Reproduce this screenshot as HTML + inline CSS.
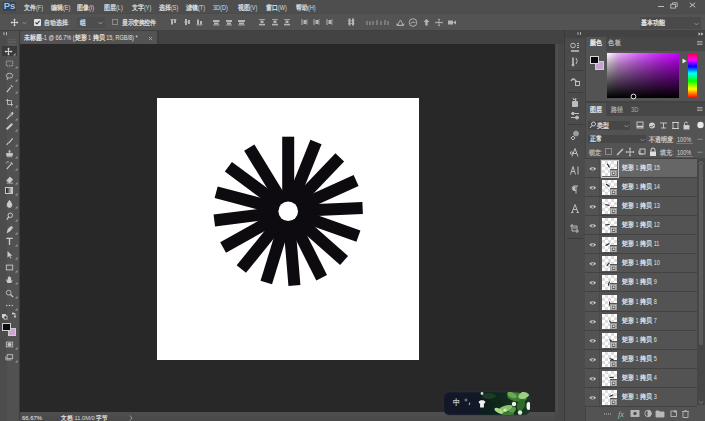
<!DOCTYPE html><html><head><meta charset="utf-8"><style>
*{margin:0;padding:0;box-sizing:border-box}
html,body{width:705px;height:421px;overflow:hidden;background:#424242;font-family:"Liberation Sans",sans-serif;color:#d6d6d6}
.a{position:absolute}
.t{position:absolute;white-space:nowrap;font-size:7px;line-height:8px;overflow:visible;color:#dcdcdc}
.c{display:inline-block;text-align:left;overflow:visible;-webkit-text-stroke:0.3px currentColor}
svg{position:absolute;overflow:visible}
</style></head><body>
<div class="a" style="left:0px;top:0px;width:705px;height:13px;background:#4e4e4e;"></div><div class="a" style="left:0px;top:13px;width:705px;height:17px;background:#535353;border-top:1px solid #4b4b4b"></div><div class="a" style="left:0px;top:30px;width:705px;height:1px;background:#404040;"></div><div class="a" style="left:0px;top:31px;width:20px;height:390px;background:#515151;"></div><div class="a" style="left:0px;top:31px;width:6.5px;height:390px;background:#4c4c4c;"></div><div class="a" style="left:19.3px;top:31px;width:0.9px;height:390px;background:#3c3c3c;"></div><div class="a" style="left:20px;top:31px;width:535px;height:13px;background:#434343;"></div><div class="a" style="left:20px;top:31px;width:137px;height:13px;background:#535353;"></div><div class="a" style="left:20px;top:44px;width:535px;height:369px;background:#282828;"></div><div class="a" style="left:20px;top:412.2px;width:535px;height:8.8px;background:linear-gradient(#4f4f4f,#494949);"></div><div class="a" style="left:555px;top:30px;width:150px;height:391px;background:#434343;"></div><div class="a" style="left:555px;top:44px;width:9px;height:377px;background:#484848;"></div><div class="a" style="left:556px;top:44px;width:1.5px;height:369px;background:#4e4e4e;"></div><div class="a" style="left:564px;top:30px;width:1px;height:391px;background:#3a3a3a;"></div><div class="a" style="left:565px;top:38px;width:20px;height:383px;background:#4b4b4b;"></div><div class="a" style="left:586px;top:37px;width:119px;height:64px;background:#535353;"></div><div class="a" style="left:586px;top:37px;width:119px;height:14px;background:#474747;"></div><div class="a" style="left:586px;top:37px;width:19.5px;height:14px;background:#535353;"></div><div class="a" style="left:586px;top:103px;width:119px;height:318px;background:#535353;"></div><div class="a" style="left:586px;top:103px;width:119px;height:13px;background:#474747;"></div><div class="a" style="left:586px;top:103px;width:20px;height:13px;background:#535353;"></div><div class="a" style="left:157px;top:98px;width:262px;height:261.5px;background:#ffffff;"></div><svg style="left:0;top:0" width="705" height="421" viewBox="0 0 705 421"><g transform="translate(288.2,211.2)" fill="#0d0b10"><rect x="-6" y="-74.5" width="12" height="80.5" transform="rotate(0.0)"/><rect x="-6" y="-74.5" width="12" height="80.5" transform="rotate(21.9)"/><rect x="-6" y="-74.5" width="12" height="80.5" transform="rotate(43.8)"/><rect x="-6" y="-74.5" width="12" height="80.5" transform="rotate(65.7)"/><rect x="-6" y="-74.5" width="12" height="80.5" transform="rotate(87.6)"/><rect x="-6" y="-74.5" width="12" height="80.5" transform="rotate(109.5)"/><rect x="-6" y="-74.5" width="12" height="80.5" transform="rotate(131.4)"/><rect x="-6" y="-74.5" width="12" height="80.5" transform="rotate(153.3)"/><rect x="-6" y="-74.5" width="12" height="80.5" transform="rotate(175.2)"/><rect x="-6" y="-74.5" width="12" height="80.5" transform="rotate(197.1)"/><rect x="-6" y="-74.5" width="12" height="80.5" transform="rotate(219.0)"/><rect x="-6" y="-74.5" width="12" height="80.5" transform="rotate(240.9)"/><rect x="-6" y="-74.5" width="12" height="80.5" transform="rotate(262.8)"/><rect x="-6" y="-74.5" width="12" height="80.5" transform="rotate(284.7)"/><rect x="-6" y="-74.5" width="12" height="80.5" transform="rotate(306.6)"/><rect x="-6" y="-74.5" width="12" height="80.5" transform="rotate(328.5)"/></g><circle cx="288.2" cy="211.2" r="9.8" fill="#fff"/></svg><div class="a" style="left:607px;top:53px;width:72px;height:45px;background:linear-gradient(to right,#fff 0%,#eeb0ff 15%,#dc68ff 42%,#cf28ff 72%,#c800ff 100%);"></div><div class="a" style="left:607px;top:53px;width:72px;height:45px;background:linear-gradient(to bottom,rgba(0,0,0,0) 0%,rgba(0,0,0,0.3) 25%,rgba(0,0,0,0.55) 50%,rgba(0,0,0,0.78) 75%,#000 100%);"></div><div class="a" style="left:687.8px;top:53px;width:8.8px;height:45.3px;background:linear-gradient(to bottom,#ff0030,#ff00ff 15%,#0000ff 30%,#00ffff 45%,#00ff00 62%,#ffff00 80%,#ff6000 92%,#ff0000);"></div><div class="a" style="left:3px;top:1.5px;width:13px;height:9px;background:#32445a;"></div><div class="t" style="left:3.8px;top:1px;font-size:9.5px;line-height:10px;color:#a2c2de;font-weight:bold;letter-spacing:-0.2px">Ps</div><div class="t" style="left:23.5px;top:3.6px;font-size:6.5px;line-height:7.5px;transform:scaleX(0.85);transform-origin:0 0;"><span class="c" style="width:7.0588235294117645px">文</span><span class="c" style="width:7.0588235294117645px">件</span>(F)</div><div class="t" style="left:50.7px;top:3.6px;font-size:6.5px;line-height:7.5px;transform:scaleX(0.85);transform-origin:0 0;"><span class="c" style="width:7.0588235294117645px">编</span><span class="c" style="width:7.0588235294117645px">辑</span>(E)</div><div class="t" style="left:77.1px;top:3.6px;font-size:6.5px;line-height:7.5px;transform:scaleX(0.85);transform-origin:0 0;"><span class="c" style="width:7.0588235294117645px">图</span><span class="c" style="width:7.0588235294117645px">像</span>(I)</div><div class="t" style="left:103.5px;top:3.6px;font-size:6.5px;line-height:7.5px;transform:scaleX(0.85);transform-origin:0 0;"><span class="c" style="width:7.0588235294117645px">图</span><span class="c" style="width:7.0588235294117645px">层</span>(L)</div><div class="t" style="left:131.7px;top:3.6px;font-size:6.5px;line-height:7.5px;transform:scaleX(0.85);transform-origin:0 0;"><span class="c" style="width:7.0588235294117645px">文</span><span class="c" style="width:7.0588235294117645px">字</span>(Y)</div><div class="t" style="left:159px;top:3.6px;font-size:6.5px;line-height:7.5px;transform:scaleX(0.85);transform-origin:0 0;"><span class="c" style="width:7.0588235294117645px">选</span><span class="c" style="width:7.0588235294117645px">择</span>(S)</div><div class="t" style="left:186px;top:3.6px;font-size:6.5px;line-height:7.5px;transform:scaleX(0.85);transform-origin:0 0;"><span class="c" style="width:7.0588235294117645px">滤</span><span class="c" style="width:7.0588235294117645px">镜</span>(T)</div><div class="t" style="left:213.4px;top:3.6px;font-size:6.5px;line-height:7.5px;transform:scaleX(0.85);transform-origin:0 0;">3D(D)</div><div class="t" style="left:237.7px;top:3.6px;font-size:6.5px;line-height:7.5px;transform:scaleX(0.85);transform-origin:0 0;"><span class="c" style="width:7.0588235294117645px">视</span><span class="c" style="width:7.0588235294117645px">图</span>(V)</div><div class="t" style="left:265.7px;top:3.6px;font-size:6.5px;line-height:7.5px;transform:scaleX(0.85);transform-origin:0 0;"><span class="c" style="width:7.0588235294117645px">窗</span><span class="c" style="width:7.0588235294117645px">口</span>(W)</div><div class="t" style="left:295.5px;top:3.6px;font-size:6.5px;line-height:7.5px;transform:scaleX(0.85);transform-origin:0 0;"><span class="c" style="width:7.0588235294117645px">帮</span><span class="c" style="width:7.0588235294117645px">助</span>(H)</div><div class="a" style="left:657.5px;top:6px;width:6.5px;height:1px;background:#bcbcbc;"></div><svg style="left:669.5px;top:1.5px" width="9" height="7"><rect x="0.8" y="2.3" width="4.6" height="3.8" fill="none" stroke="#bcbcbc" stroke-width="0.9"/><path d="M2.5 2.3V0.8h4.7v3.8H5.4" fill="none" stroke="#bcbcbc" stroke-width="0.9"/></svg><svg style="left:688.5px;top:2px" width="7" height="6"><path d="M0.8 0.8L6.2 5.2M6.2 0.8L0.8 5.2" stroke="#c4c4c4" stroke-width="1"/></svg><svg style="left:10px;top:18px" width="9" height="9" viewBox="0 0 9 9"><path d="M4.5 0.5L6 2.2H3zM4.5 8.5L6 6.8H3zM0.5 4.5L2.2 3V6zM8.5 4.5L6.8 3V6z" fill="#d2d2d2"/><path d="M4.5 1.5V7.5M1.5 4.5H7.5" stroke="#d2d2d2" stroke-width="1"/></svg><svg style="left:22px;top:21px" width="5" height="4"><path d="M0.5 1L2.5 3L4.5 1" stroke="#9a9a9a" fill="none" stroke-width="0.8"/></svg><div class="a" style="left:34px;top:19px;width:6.5px;height:6.5px;background:#e4e4e4;border-radius:1px"></div><svg style="left:34px;top:19px" width="7" height="7"><path d="M1.5 3.5L3 5L5.5 1.8" stroke="#333" fill="none" stroke-width="1.1"/></svg><div class="t" style="left:44px;top:18.7px;font-size:6.5px;line-height:7.5px;transform:scaleX(0.85);transform-origin:0 0;"><span class="c" style="width:7.0588235294117645px">自</span><span class="c" style="width:7.0588235294117645px">动</span><span class="c" style="width:7.0588235294117645px">选</span><span class="c" style="width:7.0588235294117645px">择</span>:</div><div class="a" style="left:76.5px;top:17px;width:28.5px;height:11px;background:#4d4d4d;"></div><div class="t" style="left:80px;top:18.7px;font-size:6.5px;line-height:7.5px;transform:scaleX(0.85);transform-origin:0 0;"><span class="c" style="width:7.0588235294117645px">组</span></div><svg style="left:98px;top:21px" width="5" height="4"><path d="M0.5 1L2.5 3L4.5 1" stroke="#aaa" fill="none" stroke-width="0.8"/></svg><div class="a" style="left:111.5px;top:19px;width:6px;height:6px;background:transparent;border:1px solid #8a8a8a"></div><div class="t" style="left:122px;top:18.7px;font-size:6.5px;line-height:7.5px;transform:scaleX(0.85);transform-origin:0 0;"><span class="c" style="width:6.588235294117647px">显</span><span class="c" style="width:6.588235294117647px">示</span><span class="c" style="width:6.588235294117647px">变</span><span class="c" style="width:6.588235294117647px">换</span><span class="c" style="width:6.588235294117647px">控</span><span class="c" style="width:6.588235294117647px">件</span></div><svg style="left:170px;top:18px" width="8" height="8" viewBox="0 0 8 8" fill="#b4b4b4"><rect x="0.5" y="1" width="6" height="0.8"/><rect x="1" y="1.5" width="2" height="5"/><rect x="4" y="1.5" width="2" height="3.5"/></svg><svg style="left:183.5px;top:18px" width="8" height="8" viewBox="0 0 8 8" fill="#b4b4b4"><rect x="0" y="3.6" width="6" height="0.8"/><rect x="1" y="1" width="2" height="6"/><rect x="4" y="2" width="2" height="4"/></svg><svg style="left:196px;top:18px" width="8" height="8" viewBox="0 0 8 8" fill="#b4b4b4"><rect x="0.5" y="6.5" width="6" height="0.8"/><rect x="1" y="1.5" width="2" height="5"/><rect x="4" y="3" width="2" height="3.5"/></svg><svg style="left:213px;top:18px" width="8" height="8" viewBox="0 0 8 8" fill="#b4b4b4"><rect x="0" y="2" width="6.5" height="2"/><rect x="1" y="4.5" width="4.5" height="2"/><rect x="0" y="6.6" width="6.5" height="0.8"/></svg><svg style="left:226px;top:18px" width="8" height="8" viewBox="0 0 8 8" fill="#b4b4b4"><rect x="0" y="2" width="6" height="2"/><rect x="1" y="4.5" width="4" height="2"/><rect x="0" y="6.6" width="6" height="0.8"/></svg><svg style="left:238px;top:18px" width="8" height="8" viewBox="0 0 8 8" fill="#b4b4b4"><rect x="0" y="2" width="7" height="2"/><rect x="1" y="4.5" width="5" height="2"/><rect x="0" y="6.6" width="7" height="0.8"/></svg><svg style="left:259px;top:18px" width="8" height="8" viewBox="0 0 8 8" fill="#b4b4b4"><rect x="0" y="1" width="6" height="0.8"/><rect x="1.5" y="2.5" width="3" height="2.5"/><rect x="0" y="5.8" width="6" height="1.6"/></svg><svg style="left:271.5px;top:18px" width="8" height="8" viewBox="0 0 8 8" fill="#b4b4b4"><rect x="0" y="1" width="6" height="0.8"/><rect x="1.5" y="2.5" width="3" height="2.5"/><rect x="0" y="5.8" width="6" height="1.6"/></svg><svg style="left:284px;top:18px" width="8" height="8" viewBox="0 0 8 8" fill="#b4b4b4"><rect x="0" y="1" width="6" height="0.8"/><rect x="1.5" y="2.5" width="3" height="2.5"/><rect x="0" y="5.8" width="6" height="1.6"/></svg><svg style="left:300.5px;top:18px" width="8" height="8" viewBox="0 0 8 8" fill="#b4b4b4"><rect x="0.5" y="1" width="1" height="6"/><rect x="2.5" y="2" width="3" height="4"/><rect x="5.5" y="1" width="1" height="6" opacity="0.6"/></svg><svg style="left:313px;top:18px" width="8" height="8" viewBox="0 0 8 8" fill="#b4b4b4"><rect x="0.5" y="1" width="1" height="6"/><rect x="2.5" y="2" width="3" height="4"/><rect x="5.5" y="1" width="1" height="6" opacity="0.6"/></svg><svg style="left:326px;top:18px" width="8" height="8" viewBox="0 0 8 8" fill="#b4b4b4"><rect x="0.5" y="1" width="1" height="6"/><rect x="2.5" y="2" width="3" height="4"/><rect x="5.5" y="1" width="1" height="6" opacity="0.6"/></svg><svg style="left:347.5px;top:18px" width="8" height="8" viewBox="0 0 8 8" fill="#b4b4b4"><rect x="0.5" y="0.5" width="2" height="7"/><rect x="4" y="0.5" width="2" height="7"/><rect x="0" y="2.5" width="6.5" height="0.8"/><rect x="0" y="5" width="6.5" height="0.8"/></svg><svg style="left:365px;top:18px" width="25" height="8" opacity="0.4" fill="#b4b4b4"><rect x="1" y="3" width="2" height="4"/><rect x="4" y="3" width="2" height="4"/><rect x="7" y="3" width="2" height="4"/><rect x="11" y="2" width="2" height="5"/><rect x="15" y="3" width="2" height="4"/><rect x="19" y="2" width="2" height="5"/><rect x="22" y="3" width="2" height="4"/></svg><svg style="left:395px;top:17.5px" width="62" height="9" fill="none" stroke="#b4b4b4" stroke-width="0.9"><path d="M2 7.5L5.5 2L8.5 7.5Z" /><path d="M1 6Q5 9 9.5 6" /><circle cx="18" cy="4.5" r="3.8"/><path d="M15.5 5.5Q18 3 20.5 4.5"/><path d="M31.5 1L34.5 4H32.7V7.5H30.3V4H28.5Z" fill="#b4b4b4" stroke="none"/><path d="M44 1.5V7.5M41 4.5H47" /><path d="M44 0.5L45.3 1.8H42.7zM44 8.5L45.3 7.2H42.7zM40 4.5L41.3 3.2V5.8zM48 4.5L46.7 3.2V5.8z" fill="#b4b4b4" stroke="none"/><rect x="53" y="2.5" width="5" height="4" fill="#b4b4b4" stroke="none"/><path d="M58 4.5L61 2.5V6.5Z" fill="#b4b4b4" stroke="none"/></svg><div class="a" style="left:640px;top:17px;width:61px;height:12px;background:#4a4a4a;"></div><div class="t" style="left:641px;top:19.2px;font-size:6.5px;line-height:7.5px;transform:scaleX(0.85);transform-origin:0 0;color:#e8e8e8;"><span class="c" style="width:7.0588235294117645px">基</span><span class="c" style="width:7.0588235294117645px">本</span><span class="c" style="width:7.0588235294117645px">功</span><span class="c" style="width:7.0588235294117645px">能</span></div><svg style="left:694px;top:22px" width="5" height="4"><path d="M0.5 1L2.5 3L4.5 1" stroke="#9a9a9a" fill="none" stroke-width="0.8"/></svg><div class="t" style="left:24.2px;top:33.8px;font-size:6.5px;line-height:7.5px;transform:scaleX(0.85);transform-origin:0 0;color:#e2e2e2;"><span class="c" style="width:7.0588235294117645px">未</span><span class="c" style="width:7.0588235294117645px">标</span><span class="c" style="width:7.0588235294117645px">题</span>-1 @ 66.7% (<span class="c" style="width:7.0588235294117645px">矩</span><span class="c" style="width:7.0588235294117645px">形</span> 1 <span class="c" style="width:7.0588235294117645px">拷</span><span class="c" style="width:7.0588235294117645px">贝</span> 15, RGB/8) *</div><svg style="left:147.5px;top:35.5px" width="5" height="5"><path d="M0.8 0.8L4.2 4.2M4.2 0.8L0.8 4.2" stroke="#a8a8a8" stroke-width="0.9"/></svg><div class="a" style="left:157px;top:31px;width:1.5px;height:13px;background:#3d3d3d;"></div><div class="t" style="left:21.8px;top:413.6px;font-size:6.2px;line-height:7.2px;transform:scaleX(0.95);transform-origin:0 0;color:#ececec;">66.67%</div><div class="t" style="left:61px;top:413.6px;font-size:6.2px;line-height:7.2px;transform:scaleX(0.92);transform-origin:0 0;color:#dadada;"><span class="c" style="width:6.521739130434782px">文</span><span class="c" style="width:6.521739130434782px">档</span>:11.0M/0 <span class="c" style="width:6.521739130434782px">字</span><span class="c" style="width:6.521739130434782px">节</span></div><svg style="left:129px;top:415px" width="4" height="6"><path d="M1 0.5L3 3L1 5.5" stroke="#aaa" fill="none" stroke-width="0.8"/></svg><svg style="left:2.5px;top:32.3px" width="5" height="3.5"><path d="M1 0.2V3.2M3.5 0.2V3.2" stroke="#b8b8b8" stroke-width="1"/></svg><div class="a" style="left:7.5px;top:38.6px;width:8.5px;height:0.8px;background:#5c5c5c;"></div><div class="a" style="left:7.5px;top:40.5px;width:8.5px;height:0.8px;background:#5c5c5c;"></div><div class="a" style="left:7.5px;top:42.3px;width:8.5px;height:0.8px;background:#5c5c5c;"></div><div class="a" style="left:7.5px;top:44.2px;width:8.5px;height:0.8px;background:#5c5c5c;"></div><div class="a" style="left:2px;top:45.7px;width:14.5px;height:10.5px;background:#3a3a3a;"></div><svg style="left:4.3px;top:46.5px" width="9" height="9" viewBox="0 0 9 9"><path d="M4.5 0.5L6 2.2H3zM4.5 8.5L6 6.8H3zM0.5 4.5L2.2 3V6zM8.5 4.5L6.8 3V6z" fill="#d2d2d2"/><path d="M4.5 1.5V7.5M1.5 4.5H7.5" stroke="#d2d2d2" stroke-width="1"/></svg><svg style="left:13.3px;top:53px" width="2.5" height="2.5"><path d="M0 2.5L2.5 0V2.5Z" fill="#aaa"/></svg><svg style="left:4px;top:57.9px" width="11" height="11" viewBox="0 0 11 11" fill="none" stroke="#cacaca" stroke-width="1"><g transform="translate(5.5,5.5) scale(0.8) translate(-5.5,-5.5)"><rect x="1.5" y="2.5" width="8" height="6" stroke-dasharray="1.5 1"/></g></svg><svg style="left:14.5px;top:65.9px" width="2.5" height="2.5"><path d="M0 2.5L2.5 0V2.5Z" fill="#9a9a9a"/></svg><svg style="left:4px;top:70.5px" width="11" height="11" viewBox="0 0 11 11" fill="none" stroke="#cacaca" stroke-width="1"><g transform="translate(5.5,5.5) scale(0.8) translate(-5.5,-5.5)"><ellipse cx="5.5" cy="4.5" rx="4" ry="3"/><path d="M3 7L2.5 10"/></g></svg><svg style="left:14.5px;top:78.5px" width="2.5" height="2.5"><path d="M0 2.5L2.5 0V2.5Z" fill="#9a9a9a"/></svg><svg style="left:4px;top:83.3px" width="11" height="11" viewBox="0 0 11 11" fill="none" stroke="#cacaca" stroke-width="1"><g transform="translate(5.5,5.5) scale(0.8) translate(-5.5,-5.5)"><path d="M2 10L7 4" stroke-width="1.5"/><path d="M8 1V3M10 3H8M7 1.5L9.5 4" stroke-width="0.8"/></g></svg><svg style="left:14.5px;top:91.3px" width="2.5" height="2.5"><path d="M0 2.5L2.5 0V2.5Z" fill="#9a9a9a"/></svg><svg style="left:4px;top:96.6px" width="11" height="11" viewBox="0 0 11 11" fill="none" stroke="#cacaca" stroke-width="1"><g transform="translate(5.5,5.5) scale(0.8) translate(-5.5,-5.5)"><path d="M3 1V8H10M1 3H8V10"/></g></svg><svg style="left:14.5px;top:104.6px" width="2.5" height="2.5"><path d="M0 2.5L2.5 0V2.5Z" fill="#9a9a9a"/></svg><svg style="left:4px;top:109.9px" width="11" height="11" viewBox="0 0 11 11" fill="none" stroke="#cacaca" stroke-width="1"><g transform="translate(5.5,5.5) scale(0.8) translate(-5.5,-5.5)"><path d="M2 10L7 5" stroke-width="1.6"/><path d="M6 3L9 6M7.5 2.5L9.5 1.5L10 3L8.5 5" fill="#cacaca"/></g></svg><svg style="left:14.5px;top:117.9px" width="2.5" height="2.5"><path d="M0 2.5L2.5 0V2.5Z" fill="#9a9a9a"/></svg><svg style="left:4px;top:121.4px" width="11" height="11" viewBox="0 0 11 11" fill="none" stroke="#cacaca" stroke-width="1"><g transform="translate(5.5,5.5) scale(0.8) translate(-5.5,-5.5)"><path d="M2 9L9 2" stroke-width="2.6"/></g></svg><svg style="left:14.5px;top:129.4px" width="2.5" height="2.5"><path d="M0 2.5L2.5 0V2.5Z" fill="#9a9a9a"/></svg><svg style="left:4px;top:135.5px" width="11" height="11" viewBox="0 0 11 11" fill="none" stroke="#cacaca" stroke-width="1"><g transform="translate(5.5,5.5) scale(0.8) translate(-5.5,-5.5)"><path d="M2 10Q3 7 5 7L9.5 1.5" stroke-width="1.4"/></g></svg><svg style="left:14.5px;top:143.5px" width="2.5" height="2.5"><path d="M0 2.5L2.5 0V2.5Z" fill="#9a9a9a"/></svg><svg style="left:4px;top:147.9px" width="11" height="11" viewBox="0 0 11 11" fill="none" stroke="#cacaca" stroke-width="1"><g transform="translate(5.5,5.5) scale(0.8) translate(-5.5,-5.5)"><path d="M5.5 1.5V4.5" stroke-width="2.2"/><rect x="2" y="5.5" width="7" height="2.5" fill="#cacaca"/><path d="M2 9.5H9"/></g></svg><svg style="left:14.5px;top:155.9px" width="2.5" height="2.5"><path d="M0 2.5L2.5 0V2.5Z" fill="#9a9a9a"/></svg><svg style="left:4px;top:159.8px" width="11" height="11" viewBox="0 0 11 11" fill="none" stroke="#cacaca" stroke-width="1"><g transform="translate(5.5,5.5) scale(0.8) translate(-5.5,-5.5)"><path d="M2 10L8 3" stroke-width="1.4"/><path d="M7 1.5L9.5 4" stroke-width="1.4"/><path d="M1 3A3 3 0 0 1 5 1" stroke-width="0.8"/></g></svg><svg style="left:14.5px;top:167.8px" width="2.5" height="2.5"><path d="M0 2.5L2.5 0V2.5Z" fill="#9a9a9a"/></svg><svg style="left:4px;top:173.5px" width="11" height="11" viewBox="0 0 11 11" fill="none" stroke="#cacaca" stroke-width="1"><g transform="translate(5.5,5.5) scale(0.8) translate(-5.5,-5.5)"><path d="M2 7L6 2.5L9.5 5.5L6 9.5Z" fill="#cacaca"/><path d="M2 10H10" /></g></svg><svg style="left:14.5px;top:181.5px" width="2.5" height="2.5"><path d="M0 2.5L2.5 0V2.5Z" fill="#9a9a9a"/></svg><div class="a" style="left:5px;top:186.8px;width:8.3px;height:7.6px;border:0.9px solid #c8c8c8;background:linear-gradient(to right,#1a1a1a,#d0d0d0)"></div><svg style="left:14.5px;top:193px" width="2.5" height="2.5"><path d="M0 2.5L2.5 0V2.5Z" fill="#9a9a9a"/></svg><svg style="left:4px;top:198.3px" width="11" height="11" viewBox="0 0 11 11" fill="none" stroke="#cacaca" stroke-width="1"><g transform="translate(5.5,5.5) scale(0.8) translate(-5.5,-5.5)"><path d="M5.5 1.5Q9 6 8.5 7.5A3 3 0 0 1 2.5 7.5Q2 6 5.5 1.5Z" fill="#cacaca"/></g></svg><svg style="left:14.5px;top:206.3px" width="2.5" height="2.5"><path d="M0 2.5L2.5 0V2.5Z" fill="#9a9a9a"/></svg><svg style="left:4px;top:211.1px" width="11" height="11" viewBox="0 0 11 11" fill="none" stroke="#cacaca" stroke-width="1"><g transform="translate(5.5,5.5) scale(0.8) translate(-5.5,-5.5)"><circle cx="6.5" cy="4" r="2.8" fill="none" stroke-width="1.2"/><path d="M4.5 6L2 9.5" stroke-width="1.4"/></g></svg><svg style="left:14.5px;top:219.1px" width="2.5" height="2.5"><path d="M0 2.5L2.5 0V2.5Z" fill="#9a9a9a"/></svg><svg style="left:4px;top:223.9px" width="11" height="11" viewBox="0 0 11 11" fill="none" stroke="#cacaca" stroke-width="1"><g transform="translate(5.5,5.5) scale(0.8) translate(-5.5,-5.5)"><path d="M2.5 9.5L4 4.5L8 1.5L9.5 3L6.5 7Z" fill="#cacaca"/></g></svg><svg style="left:14.5px;top:231.9px" width="2.5" height="2.5"><path d="M0 2.5L2.5 0V2.5Z" fill="#9a9a9a"/></svg><svg style="left:4px;top:236.3px" width="11" height="11" viewBox="0 0 11 11" fill="none" stroke="#cacaca" stroke-width="1"><g transform="translate(5.5,5.5) scale(0.8) translate(-5.5,-5.5)"><path d="M1.5 1.5H9.5M5.5 1.5V10" stroke-width="1.6"/></g></svg><svg style="left:14.5px;top:244.3px" width="2.5" height="2.5"><path d="M0 2.5L2.5 0V2.5Z" fill="#9a9a9a"/></svg><svg style="left:4px;top:249.1px" width="11" height="11" viewBox="0 0 11 11" fill="none" stroke="#cacaca" stroke-width="1"><g transform="translate(5.5,5.5) scale(0.8) translate(-5.5,-5.5)"><path d="M3 1V9.5L5 7.5L7 10.5L8 10L6.2 7H9Z" fill="#cacaca" stroke="none"/></g></svg><svg style="left:14.5px;top:257.1px" width="2.5" height="2.5"><path d="M0 2.5L2.5 0V2.5Z" fill="#9a9a9a"/></svg><svg style="left:4px;top:261.9px" width="11" height="11" viewBox="0 0 11 11" fill="none" stroke="#cacaca" stroke-width="1"><g transform="translate(5.5,5.5) scale(0.8) translate(-5.5,-5.5)"><rect x="1.5" y="2.5" width="8" height="6" fill="none" stroke-width="1.1"/></g></svg><svg style="left:14.5px;top:269.9px" width="2.5" height="2.5"><path d="M0 2.5L2.5 0V2.5Z" fill="#9a9a9a"/></svg><svg style="left:4px;top:274.3px" width="11" height="11" viewBox="0 0 11 11" fill="none" stroke="#cacaca" stroke-width="1"><g transform="translate(5.5,5.5) scale(0.8) translate(-5.5,-5.5)"><path d="M3 10Q1 7 1.5 5.5L2.5 5L3.5 7V2.5H4.5V6V1.5H5.5V6V2H6.5V6.5V3H7.5V7.5L8.5 6.5H9.5Q9 8 7.5 10Z" fill="#cacaca" stroke="none"/></g></svg><svg style="left:14.5px;top:282.3px" width="2.5" height="2.5"><path d="M0 2.5L2.5 0V2.5Z" fill="#9a9a9a"/></svg><svg style="left:4px;top:288.0px" width="11" height="11" viewBox="0 0 11 11" fill="none" stroke="#cacaca" stroke-width="1"><g transform="translate(5.5,5.5) scale(0.8) translate(-5.5,-5.5)"><circle cx="4.5" cy="4.5" r="3"/><path d="M6.8 6.8L10 10" stroke-width="1.6"/></g></svg><svg style="left:14.5px;top:296.0px" width="2.5" height="2.5"><path d="M0 2.5L2.5 0V2.5Z" fill="#9a9a9a"/></svg><svg style="left:4px;top:299.9px" width="11" height="11" viewBox="0 0 11 11" fill="none" stroke="#cacaca" stroke-width="1"><g transform="translate(5.5,5.5) scale(0.8) translate(-5.5,-5.5)"><circle cx="2" cy="5.5" r="0.9" fill="#cacaca" stroke="none"/><circle cx="5.5" cy="5.5" r="0.9" fill="#cacaca" stroke="none"/><circle cx="9" cy="5.5" r="0.9" fill="#cacaca" stroke="none"/></g></svg><svg style="left:14.5px;top:307.9px" width="2.5" height="2.5"><path d="M0 2.5L2.5 0V2.5Z" fill="#9a9a9a"/></svg><svg style="left:2px;top:312px" width="16" height="8" fill="none" stroke="#d4d4d4" stroke-width="0.9"><rect x="0.5" y="2.5" width="3" height="3" fill="#d4d4d4"/><rect x="2" y="4" width="3" height="3" fill="#222" stroke="#d4d4d4"/><path d="M10 1.5H13V5M11.5 0.5L10 1.5L11.5 2.5M12 4L13 5.5L14 4"/></svg><div class="a" style="left:2px;top:323.2px;width:8.5px;height:8px;background:#0e0a12;border:0.8px solid #cfcfcf"></div><div class="a" style="left:7.5px;top:327.5px;width:8.5px;height:8.5px;background:#c7a6d4;border:0.8px solid #cfcfcf"></div><div class="a" style="left:2px;top:323.2px;width:8.5px;height:8px;background:#0e0a12;border:0.8px solid #cfcfcf"></div><div class="a" style="left:11.6px;top:327.5px;width:4.4px;height:8.5px;background:#c7a6d4;border:0.8px solid #cfcfcf;border-left:none"></div><div class="a" style="left:7.5px;top:331.2px;width:4.1px;height:4.8px;background:#c7a6d4;border-bottom:0.8px solid #cfcfcf;border-left:0.8px solid #cfcfcf"></div><svg style="left:4px;top:339.2px" width="11" height="11" viewBox="0 0 11 11" fill="none" stroke="#cacaca" stroke-width="1"><g transform="translate(5.5,5.5) scale(0.8) translate(-5.5,-5.5)"><rect x="1.5" y="2.5" width="8" height="6"/><circle cx="5.5" cy="5.5" r="2" fill="#cacaca"/></g></svg><svg style="left:14.5px;top:347.2px" width="2.5" height="2.5"><path d="M0 2.5L2.5 0V2.5Z" fill="#9a9a9a"/></svg><svg style="left:4px;top:352.3px" width="11" height="11" viewBox="0 0 11 11" fill="none" stroke="#cacaca" stroke-width="1"><g transform="translate(5.5,5.5) scale(0.8) translate(-5.5,-5.5)"><rect x="2.5" y="2" width="7" height="5"/><path d="M1 4V8.5H8"/></g></svg><svg style="left:14.5px;top:360.3px" width="2.5" height="2.5"><path d="M0 2.5L2.5 0V2.5Z" fill="#9a9a9a"/></svg><svg style="left:577px;top:32.3px" width="5" height="3"><path d="M1 0.2V2.8M3.5 0.2V2.8" stroke="#b8b8b8" stroke-width="1"/></svg><svg style="left:697.5px;top:32px" width="6" height="4"><path d="M0.5 0.3L2.7 2L0.5 3.7ZM3.2 0.3L5.4 2L3.2 3.7Z" fill="#c4c4c4"/></svg><svg style="left:569.0px;top:41.9px" width="12" height="11" viewBox="0 0 12 11" fill="none" stroke="#bdbdbd" stroke-width="1"><circle cx="4" cy="3.5" r="2.3"/><path d="M8 1.5H10M8 3.5H10M8 5.5H10" /><path d="M2 9H10" stroke-width="1.6"/></svg><svg style="left:569.0px;top:55.5px" width="12" height="11" viewBox="0 0 12 11" fill="none" stroke="#bdbdbd" stroke-width="1"><path d="M4 1.5V9" stroke-width="1.6"/><circle cx="4" cy="9" r="1" fill="#bdbdbd"/><path d="M7 2Q9.5 4.5 7 8" /></svg><div class="a" style="left:567px;top:70px;width:16px;height:1px;background:#3c3c3c;"></div><svg style="left:569.0px;top:75.5px" width="12" height="11" viewBox="0 0 12 11" fill="none" stroke="#bdbdbd" stroke-width="1"><path d="M2 5Q4 1.5 6 4L8 6" stroke-width="1.4"/><rect x="6.5" y="5.5" width="4" height="4"/></svg><div class="a" style="left:567px;top:92px;width:16px;height:1px;background:#3c3c3c;"></div><svg style="left:569.0px;top:96.5px" width="12" height="11" viewBox="0 0 12 11" fill="none" stroke="#bdbdbd" stroke-width="1"><path d="M4 1L5 3L7 1.5L6.5 4M3.5 4.5H8.5V9.5H3.5Z" fill="#bdbdbd"/></svg><svg style="left:569.0px;top:110.1px" width="12" height="11" viewBox="0 0 12 11" fill="none" stroke="#bdbdbd" stroke-width="1"><path d="M2 3.5H10M2 7.5H10" stroke-width="1"/><circle cx="4" cy="3.5" r="1.2" fill="#bdbdbd"/><circle cx="8" cy="7.5" r="1.5" fill="#bdbdbd"/></svg><div class="a" style="left:567px;top:124px;width:16px;height:1px;background:#3c3c3c;"></div><svg style="left:569.0px;top:130.1px" width="12" height="11" viewBox="0 0 12 11" fill="none" stroke="#bdbdbd" stroke-width="1"><circle cx="7" cy="3.5" r="2.5" fill="#bdbdbd" opacity="0.7"/><path d="M2 8L4 6L6 8L4 10Z"/></svg><svg style="left:569.0px;top:146.5px" width="12" height="11" viewBox="0 0 12 11" fill="none" stroke="#bdbdbd" stroke-width="1"><path d="M6 1.5L3 9.5M6 1.5L9 9.5M4 6.5H8" /><circle cx="2.5" cy="6" r="1.2"/></svg><svg style="left:569.0px;top:164.5px" width="12" height="11" viewBox="0 0 12 11" fill="none" stroke="#bdbdbd" stroke-width="1"><path d="M1.5 9.5L4 1.5L6.5 9.5M2.5 6.5H5.5M9 1.5V9.5" /></svg><svg style="left:569.0px;top:183.5px" width="12" height="11" viewBox="0 0 12 11" fill="none" stroke="#bdbdbd" stroke-width="1"><path d="M5 2H9M7 2V9.5M5 2A2.3 2.3 0 0 0 5 6.5H7" /><path d="M5 2.5V6" stroke-width="2"/></svg><svg style="left:569.0px;top:202.5px" width="12" height="11" viewBox="0 0 12 11" fill="none" stroke="#bdbdbd" stroke-width="1"><path d="M3 9.5L6 1.5L9 9.5M4.2 6.5H7.8M2 9.5H4.5M7.5 9.5H10" /></svg><svg style="left:569.0px;top:222.5px" width="12" height="11" viewBox="0 0 12 11" fill="none" stroke="#bdbdbd" stroke-width="1"><path d="M3 1V8H10M1 3H8V10M4 5H7" /></svg><div class="a" style="left:567px;top:238px;width:16px;height:1px;background:#3c3c3c;"></div><div class="t" style="left:590px;top:39.2px;font-size:6.5px;line-height:7.5px;transform:scaleX(0.85);transform-origin:0 0;color:#ececec;"><span class="c" style="width:7.0588235294117645px">颜</span><span class="c" style="width:7.0588235294117645px">色</span></div><div class="t" style="left:607.5px;top:39.2px;font-size:6.5px;line-height:7.5px;transform:scaleX(0.85);transform-origin:0 0;color:#b4b4b4;"><span class="c" style="width:8.23529411764706px">色</span><span class="c" style="width:8.23529411764706px">板</span></div><svg style="left:696.5px;top:41.3px" width="6" height="4"><path d="M0 0.5H5.5M0 2H5.5M0 3.5H5.5" stroke="#a8a8a8" stroke-width="0.8"/></svg><div class="a" style="left:595px;top:60.7px;width:9px;height:9.3px;background:#c4a2d2;border:0.8px solid #cfcfcf"></div><div class="a" style="left:589.8px;top:55.7px;width:9.2px;height:8.6px;background:#0b0810;border:0.9px solid #d8d8d8"></div><svg style="left:682px;top:58px" width="5" height="6"><path d="M0.5 0.5L4.5 3L0.5 5.5Z" fill="#f0f0f0"/></svg><svg style="left:630px;top:93px" width="7" height="7"><circle cx="3.5" cy="3.5" r="2.4" fill="none" stroke="#f4f4f4" stroke-width="0.9"/></svg><div class="t" style="left:590px;top:105.5px;font-size:7px;line-height:8px;transform:scaleX(0.85);transform-origin:0 0;color:#e6e6e6;width:14px;"><span class="c" style="width:7.0588235294117645px">图</span><span class="c" style="width:7.0588235294117645px">层</span></div><div class="t" style="left:611px;top:105.5px;font-size:7px;line-height:8px;transform:scaleX(0.85);transform-origin:0 0;color:#a8a8a8;width:14px;"><span class="c" style="width:7.0588235294117645px">路</span><span class="c" style="width:7.0588235294117645px">径</span></div><div class="t" style="left:631px;top:105.5px;font-size:7px;line-height:8px;transform:scaleX(0.85);transform-origin:0 0;color:#a8a8a8;width:10px;">3D</div><svg style="left:696.5px;top:107.3px" width="6" height="4"><path d="M0 0.5H5.5M0 2H5.5M0 3.5H5.5" stroke="#a8a8a8" stroke-width="0.8"/></svg><div class="a" style="left:588px;top:121px;width:42px;height:8.5px;background:#474747;"></div><svg style="left:589px;top:121px" width="7" height="8"><circle cx="4.5" cy="3" r="2" fill="none" stroke="#d6d6d6" stroke-width="0.9"/><path d="M3 4.5L1 7" stroke="#d6d6d6" stroke-width="1"/></svg><div class="t" style="left:597px;top:121.5px;font-size:7px;line-height:8px;transform:scaleX(0.85);transform-origin:0 0;color:#d8d8d8;width:14px;"><span class="c" style="width:7.0588235294117645px">类</span><span class="c" style="width:7.0588235294117645px">型</span></div><svg style="left:624px;top:124px" width="5" height="4"><path d="M0.5 1L2.5 3L4.5 1" stroke="#9a9a9a" fill="none" stroke-width="0.8"/></svg><svg style="left:636px;top:121px" width="70" height="9" fill="none" stroke="#cfcfcf" stroke-width="0.9"><rect x="1" y="1" width="6" height="6"/><path d="M1 5.5H7" stroke-width="1.5"/><circle cx="16" cy="4.5" r="3" fill="#cfcfcf" stroke="none"/><path d="M13.5 5.5Q16 7 18 4" stroke="#535353" stroke-width="0.9"/><path d="M24 2H31M27.5 2V7M25 7H30"/><rect x="37" y="1.5" width="5" height="6"/><path d="M36 1.5H43M36 7.5H43"/><path d="M48.5 4.5V2.5A1.5 1.5 0 0 1 51.5 2.5"/><rect x="48" y="4.5" width="5" height="3.5" fill="#cfcfcf"/><circle cx="64.5" cy="4" r="3.2" fill="#e8e8e8" stroke="none"/></svg><div class="a" style="left:588px;top:134.8px;width:58px;height:8.5px;background:#474747;"></div><div class="t" style="left:590px;top:135px;font-size:7px;line-height:8px;transform:scaleX(0.85);transform-origin:0 0;color:#e0e0e0;width:14px;"><span class="c" style="width:7.0588235294117645px">正</span><span class="c" style="width:7.0588235294117645px">常</span></div><svg style="left:640px;top:138px" width="5" height="4"><path d="M0.5 1L2.5 3L4.5 1" stroke="#9a9a9a" fill="none" stroke-width="0.8"/></svg><div class="t" style="left:649px;top:135.5px;font-size:6.5px;line-height:7.5px;transform:scaleX(0.85);transform-origin:0 0;color:#c8c8c8;width:26px;"><span class="c" style="width:7.0588235294117645px">不</span><span class="c" style="width:7.0588235294117645px">透</span><span class="c" style="width:7.0588235294117645px">明</span><span class="c" style="width:7.0588235294117645px">度</span>:</div><div class="t" style="left:677px;top:135.5px;font-size:6.5px;line-height:7.5px;transform:scaleX(0.85);transform-origin:0 0;color:#d8d8d8;width:16px;">100%</div><div class="a" style="left:676px;top:143px;width:17px;height:0.7px;background:#7a7a7a;"></div><svg style="left:697px;top:138px" width="6" height="3"><path d="M0.5 1.2H5.5" stroke="#9a9a9a" stroke-width="0.8"/></svg><div class="t" style="left:589px;top:148.5px;font-size:6.5px;line-height:7.5px;transform:scaleX(0.85);transform-origin:0 0;color:#b0b0b0;width:14px;"><span class="c" style="width:7.0588235294117645px">锁</span><span class="c" style="width:7.0588235294117645px">定</span>:</div><svg style="left:604px;top:147px" width="50" height="10" fill="none" stroke="#cfcfcf" stroke-width="0.9"><rect x="1.5" y="1.5" width="6" height="6" stroke-dasharray="1 1" /><path d="M13 8L19 2" stroke-width="1.3"/><path d="M26 1V9M22 5H30" /><path d="M26 0.5L27.2 1.8H24.8zM26 9.5L27.2 8.2H24.8zM21.5 5L22.8 3.8V6.2zM30.5 5L29.2 3.8V6.2z" fill="#cfcfcf" stroke="none"/><rect x="36" y="2" width="5" height="5"/><path d="M35 3.5V7H39"/></svg><svg style="left:649px;top:147px" width="8" height="10"><path d="M2 4.5V3A2 2 0 0 1 6 3V4.5" fill="none" stroke="#e0e0e0" stroke-width="1"/><rect x="1" y="4.5" width="6" height="4.5" fill="#e0e0e0"/></svg><div class="t" style="left:660px;top:148.5px;font-size:6.5px;line-height:7.5px;transform:scaleX(0.85);transform-origin:0 0;color:#b8b8b8;width:14px;"><span class="c" style="width:7.0588235294117645px">填</span><span class="c" style="width:7.0588235294117645px">充</span>:</div><div class="t" style="left:677px;top:148.5px;font-size:6.5px;line-height:7.5px;transform:scaleX(0.85);transform-origin:0 0;color:#d8d8d8;width:16px;">100%</div><div class="a" style="left:676px;top:156px;width:17px;height:0.7px;background:#7a7a7a;"></div><svg style="left:697px;top:151px" width="6" height="3"><path d="M0.5 1.2H5.5" stroke="#9a9a9a" stroke-width="0.8"/></svg><div class="a" style="left:585px;top:158px;width:112px;height:247px;background:#535353;border-top:1px solid #3f3f3f"></div><div class="a" style="left:697px;top:158px;width:8px;height:247px;background:#464646;"></div><div class="a" style="left:698.5px;top:164px;width:4.5px;height:181px;background:#5b5b5b;border-radius:1px"></div><svg style="left:698px;top:160px" width="6" height="5"><path d="M0.8 3.8L3 1.5L5.2 3.8" stroke="#8a8a8a" fill="none" stroke-width="0.8"/></svg><svg style="left:698px;top:400px" width="6" height="5"><path d="M0.8 1.2L3 3.5L5.2 1.2" stroke="#8a8a8a" fill="none" stroke-width="0.8"/></svg><div class="a" style="left:600px;top:159.0px;width:97px;height:18px;background:#666666;"></div><div class="a" style="left:585px;top:177.0px;width:112px;height:1px;background:#434343;"></div><div class="a" style="left:599px;top:159.0px;width:1px;height:18px;background:#4a4a4a;"></div><svg style="left:589px;top:166.0px" width="8" height="6"><path d="M0.3 2.8Q3.7 -0.6 7.1 2.8Q3.7 6.2 0.3 2.8Z" fill="#d4d4d4"/><circle cx="3.7" cy="2.8" r="1.25" fill="#555"/><circle cx="3.7" cy="2.8" r="0.4" fill="#ddd"/></svg><div class="a" style="left:600.5px;top:159.5px;width:18px;height:18px;background:transparent;border:1px solid #cfcfcf"></div><div class="a" style="left:602px;top:161.0px;width:15px;height:15px;background-color:#fff;background-image:linear-gradient(45deg,#dedede 25%,transparent 25%,transparent 75%,#dedede 75%),linear-gradient(45deg,#dedede 25%,transparent 25%,transparent 75%,#dedede 75%);background-size:6px 6px;background-position:0 0,3px 3px"></div><svg style="left:602px;top:161.0px" width="15" height="15"><g transform="translate(7.5,6.5) rotate(328.5)"><rect x="-0.55" y="-4.3" width="1.1" height="4.3" fill="#1a1a1a"/></g></svg><svg style="left:610px;top:169.0px" width="7" height="7"><rect x="0" y="0" width="7" height="7" fill="#9a9a9a"/><rect x="0" y="0" width="7" height="1" fill="#555"/><rect x="1.2" y="2" width="4.8" height="4.2" fill="#e4e4e4"/><rect x="2.2" y="3" width="2.8" height="2.4" fill="none" stroke="#444" stroke-width="0.8"/></svg><div class="t" style="left:621.5px;top:164.0px;font-size:6.5px;line-height:7.5px;transform:scaleX(0.85);transform-origin:0 0;color:#e0e0e0;width:60px;"><span class="c" style="width:7.0588235294117645px">矩</span><span class="c" style="width:7.0588235294117645px">形</span> 1 <span class="c" style="width:7.0588235294117645px">拷</span><span class="c" style="width:7.0588235294117645px">贝</span> 15</div><div class="a" style="left:585px;top:196.08px;width:112px;height:1px;background:#434343;"></div><div class="a" style="left:599px;top:178.08px;width:1px;height:18px;background:#4a4a4a;"></div><svg style="left:589px;top:185.08px" width="8" height="6"><path d="M0.3 2.8Q3.7 -0.6 7.1 2.8Q3.7 6.2 0.3 2.8Z" fill="#d4d4d4"/><circle cx="3.7" cy="2.8" r="1.25" fill="#555"/><circle cx="3.7" cy="2.8" r="0.4" fill="#ddd"/></svg><div class="a" style="left:602px;top:180.08px;width:15px;height:15px;background-color:#fff;background-image:linear-gradient(45deg,#dedede 25%,transparent 25%,transparent 75%,#dedede 75%),linear-gradient(45deg,#dedede 25%,transparent 25%,transparent 75%,#dedede 75%);background-size:6px 6px;background-position:0 0,3px 3px"></div><svg style="left:602px;top:180.08px" width="15" height="15"><g transform="translate(7.5,6.5) rotate(306.6)"><rect x="-0.55" y="-4.3" width="1.1" height="4.3" fill="#1a1a1a"/></g></svg><svg style="left:610px;top:188.08px" width="7" height="7"><rect x="0" y="0" width="7" height="7" fill="#9a9a9a"/><rect x="0" y="0" width="7" height="1" fill="#555"/><rect x="1.2" y="2" width="4.8" height="4.2" fill="#e4e4e4"/><rect x="2.2" y="3" width="2.8" height="2.4" fill="none" stroke="#444" stroke-width="0.8"/></svg><div class="t" style="left:621.5px;top:183.08px;font-size:6.5px;line-height:7.5px;transform:scaleX(0.85);transform-origin:0 0;color:#e0e0e0;width:60px;"><span class="c" style="width:7.0588235294117645px">矩</span><span class="c" style="width:7.0588235294117645px">形</span> 1 <span class="c" style="width:7.0588235294117645px">拷</span><span class="c" style="width:7.0588235294117645px">贝</span> 14</div><div class="a" style="left:585px;top:215.16px;width:112px;height:1px;background:#434343;"></div><div class="a" style="left:599px;top:197.16px;width:1px;height:18px;background:#4a4a4a;"></div><svg style="left:589px;top:204.16px" width="8" height="6"><path d="M0.3 2.8Q3.7 -0.6 7.1 2.8Q3.7 6.2 0.3 2.8Z" fill="#d4d4d4"/><circle cx="3.7" cy="2.8" r="1.25" fill="#555"/><circle cx="3.7" cy="2.8" r="0.4" fill="#ddd"/></svg><div class="a" style="left:602px;top:199.16px;width:15px;height:15px;background-color:#fff;background-image:linear-gradient(45deg,#dedede 25%,transparent 25%,transparent 75%,#dedede 75%),linear-gradient(45deg,#dedede 25%,transparent 25%,transparent 75%,#dedede 75%);background-size:6px 6px;background-position:0 0,3px 3px"></div><svg style="left:602px;top:199.16px" width="15" height="15"><g transform="translate(7.5,6.5) rotate(284.7)"><rect x="-0.55" y="-4.3" width="1.1" height="4.3" fill="#1a1a1a"/></g></svg><svg style="left:610px;top:207.16px" width="7" height="7"><rect x="0" y="0" width="7" height="7" fill="#9a9a9a"/><rect x="0" y="0" width="7" height="1" fill="#555"/><rect x="1.2" y="2" width="4.8" height="4.2" fill="#e4e4e4"/><rect x="2.2" y="3" width="2.8" height="2.4" fill="none" stroke="#444" stroke-width="0.8"/></svg><div class="t" style="left:621.5px;top:202.16px;font-size:6.5px;line-height:7.5px;transform:scaleX(0.85);transform-origin:0 0;color:#e0e0e0;width:60px;"><span class="c" style="width:7.0588235294117645px">矩</span><span class="c" style="width:7.0588235294117645px">形</span> 1 <span class="c" style="width:7.0588235294117645px">拷</span><span class="c" style="width:7.0588235294117645px">贝</span> 13</div><div class="a" style="left:585px;top:234.24px;width:112px;height:1px;background:#434343;"></div><div class="a" style="left:599px;top:216.24px;width:1px;height:18px;background:#4a4a4a;"></div><svg style="left:589px;top:223.24px" width="8" height="6"><path d="M0.3 2.8Q3.7 -0.6 7.1 2.8Q3.7 6.2 0.3 2.8Z" fill="#d4d4d4"/><circle cx="3.7" cy="2.8" r="1.25" fill="#555"/><circle cx="3.7" cy="2.8" r="0.4" fill="#ddd"/></svg><div class="a" style="left:602px;top:218.24px;width:15px;height:15px;background-color:#fff;background-image:linear-gradient(45deg,#dedede 25%,transparent 25%,transparent 75%,#dedede 75%),linear-gradient(45deg,#dedede 25%,transparent 25%,transparent 75%,#dedede 75%);background-size:6px 6px;background-position:0 0,3px 3px"></div><svg style="left:602px;top:218.24px" width="15" height="15"><g transform="translate(7.5,6.5) rotate(262.8)"><rect x="-0.55" y="-4.3" width="1.1" height="4.3" fill="#1a1a1a"/></g></svg><svg style="left:610px;top:226.24px" width="7" height="7"><rect x="0" y="0" width="7" height="7" fill="#9a9a9a"/><rect x="0" y="0" width="7" height="1" fill="#555"/><rect x="1.2" y="2" width="4.8" height="4.2" fill="#e4e4e4"/><rect x="2.2" y="3" width="2.8" height="2.4" fill="none" stroke="#444" stroke-width="0.8"/></svg><div class="t" style="left:621.5px;top:221.24px;font-size:6.5px;line-height:7.5px;transform:scaleX(0.85);transform-origin:0 0;color:#e0e0e0;width:60px;"><span class="c" style="width:7.0588235294117645px">矩</span><span class="c" style="width:7.0588235294117645px">形</span> 1 <span class="c" style="width:7.0588235294117645px">拷</span><span class="c" style="width:7.0588235294117645px">贝</span> 12</div><div class="a" style="left:585px;top:253.32px;width:112px;height:1px;background:#434343;"></div><div class="a" style="left:599px;top:235.32px;width:1px;height:18px;background:#4a4a4a;"></div><svg style="left:589px;top:242.32px" width="8" height="6"><path d="M0.3 2.8Q3.7 -0.6 7.1 2.8Q3.7 6.2 0.3 2.8Z" fill="#d4d4d4"/><circle cx="3.7" cy="2.8" r="1.25" fill="#555"/><circle cx="3.7" cy="2.8" r="0.4" fill="#ddd"/></svg><div class="a" style="left:602px;top:237.32px;width:15px;height:15px;background-color:#fff;background-image:linear-gradient(45deg,#dedede 25%,transparent 25%,transparent 75%,#dedede 75%),linear-gradient(45deg,#dedede 25%,transparent 25%,transparent 75%,#dedede 75%);background-size:6px 6px;background-position:0 0,3px 3px"></div><svg style="left:602px;top:237.32px" width="15" height="15"><g transform="translate(7.5,6.5) rotate(240.9)"><rect x="-0.55" y="-4.3" width="1.1" height="4.3" fill="#1a1a1a"/></g></svg><svg style="left:610px;top:245.32px" width="7" height="7"><rect x="0" y="0" width="7" height="7" fill="#9a9a9a"/><rect x="0" y="0" width="7" height="1" fill="#555"/><rect x="1.2" y="2" width="4.8" height="4.2" fill="#e4e4e4"/><rect x="2.2" y="3" width="2.8" height="2.4" fill="none" stroke="#444" stroke-width="0.8"/></svg><div class="t" style="left:621.5px;top:240.32px;font-size:6.5px;line-height:7.5px;transform:scaleX(0.85);transform-origin:0 0;color:#e0e0e0;width:60px;"><span class="c" style="width:7.0588235294117645px">矩</span><span class="c" style="width:7.0588235294117645px">形</span> 1 <span class="c" style="width:7.0588235294117645px">拷</span><span class="c" style="width:7.0588235294117645px">贝</span> 11</div><div class="a" style="left:585px;top:272.4px;width:112px;height:1px;background:#434343;"></div><div class="a" style="left:599px;top:254.4px;width:1px;height:18px;background:#4a4a4a;"></div><svg style="left:589px;top:261.4px" width="8" height="6"><path d="M0.3 2.8Q3.7 -0.6 7.1 2.8Q3.7 6.2 0.3 2.8Z" fill="#d4d4d4"/><circle cx="3.7" cy="2.8" r="1.25" fill="#555"/><circle cx="3.7" cy="2.8" r="0.4" fill="#ddd"/></svg><div class="a" style="left:602px;top:256.4px;width:15px;height:15px;background-color:#fff;background-image:linear-gradient(45deg,#dedede 25%,transparent 25%,transparent 75%,#dedede 75%),linear-gradient(45deg,#dedede 25%,transparent 25%,transparent 75%,#dedede 75%);background-size:6px 6px;background-position:0 0,3px 3px"></div><svg style="left:602px;top:256.4px" width="15" height="15"><g transform="translate(7.5,6.5) rotate(219.0)"><rect x="-0.55" y="-4.3" width="1.1" height="4.3" fill="#1a1a1a"/></g></svg><svg style="left:610px;top:264.4px" width="7" height="7"><rect x="0" y="0" width="7" height="7" fill="#9a9a9a"/><rect x="0" y="0" width="7" height="1" fill="#555"/><rect x="1.2" y="2" width="4.8" height="4.2" fill="#e4e4e4"/><rect x="2.2" y="3" width="2.8" height="2.4" fill="none" stroke="#444" stroke-width="0.8"/></svg><div class="t" style="left:621.5px;top:259.4px;font-size:6.5px;line-height:7.5px;transform:scaleX(0.85);transform-origin:0 0;color:#e0e0e0;width:60px;"><span class="c" style="width:7.0588235294117645px">矩</span><span class="c" style="width:7.0588235294117645px">形</span> 1 <span class="c" style="width:7.0588235294117645px">拷</span><span class="c" style="width:7.0588235294117645px">贝</span> 10</div><div class="a" style="left:585px;top:291.48px;width:112px;height:1px;background:#434343;"></div><div class="a" style="left:599px;top:273.48px;width:1px;height:18px;background:#4a4a4a;"></div><svg style="left:589px;top:280.48px" width="8" height="6"><path d="M0.3 2.8Q3.7 -0.6 7.1 2.8Q3.7 6.2 0.3 2.8Z" fill="#d4d4d4"/><circle cx="3.7" cy="2.8" r="1.25" fill="#555"/><circle cx="3.7" cy="2.8" r="0.4" fill="#ddd"/></svg><div class="a" style="left:602px;top:275.48px;width:15px;height:15px;background-color:#fff;background-image:linear-gradient(45deg,#dedede 25%,transparent 25%,transparent 75%,#dedede 75%),linear-gradient(45deg,#dedede 25%,transparent 25%,transparent 75%,#dedede 75%);background-size:6px 6px;background-position:0 0,3px 3px"></div><svg style="left:602px;top:275.48px" width="15" height="15"><g transform="translate(7.5,6.5) rotate(197.1)"><rect x="-0.55" y="-4.3" width="1.1" height="4.3" fill="#1a1a1a"/></g></svg><svg style="left:610px;top:283.48px" width="7" height="7"><rect x="0" y="0" width="7" height="7" fill="#9a9a9a"/><rect x="0" y="0" width="7" height="1" fill="#555"/><rect x="1.2" y="2" width="4.8" height="4.2" fill="#e4e4e4"/><rect x="2.2" y="3" width="2.8" height="2.4" fill="none" stroke="#444" stroke-width="0.8"/></svg><div class="t" style="left:621.5px;top:278.48px;font-size:6.5px;line-height:7.5px;transform:scaleX(0.85);transform-origin:0 0;color:#e0e0e0;width:60px;"><span class="c" style="width:7.0588235294117645px">矩</span><span class="c" style="width:7.0588235294117645px">形</span> 1 <span class="c" style="width:7.0588235294117645px">拷</span><span class="c" style="width:7.0588235294117645px">贝</span> 9</div><div class="a" style="left:585px;top:310.56px;width:112px;height:1px;background:#434343;"></div><div class="a" style="left:599px;top:292.56px;width:1px;height:18px;background:#4a4a4a;"></div><svg style="left:589px;top:299.56px" width="8" height="6"><path d="M0.3 2.8Q3.7 -0.6 7.1 2.8Q3.7 6.2 0.3 2.8Z" fill="#d4d4d4"/><circle cx="3.7" cy="2.8" r="1.25" fill="#555"/><circle cx="3.7" cy="2.8" r="0.4" fill="#ddd"/></svg><div class="a" style="left:602px;top:294.56px;width:15px;height:15px;background-color:#fff;background-image:linear-gradient(45deg,#dedede 25%,transparent 25%,transparent 75%,#dedede 75%),linear-gradient(45deg,#dedede 25%,transparent 25%,transparent 75%,#dedede 75%);background-size:6px 6px;background-position:0 0,3px 3px"></div><svg style="left:602px;top:294.56px" width="15" height="15"><g transform="translate(7.5,6.5) rotate(175.2)"><rect x="-0.55" y="-4.3" width="1.1" height="4.3" fill="#1a1a1a"/></g></svg><svg style="left:610px;top:302.56px" width="7" height="7"><rect x="0" y="0" width="7" height="7" fill="#9a9a9a"/><rect x="0" y="0" width="7" height="1" fill="#555"/><rect x="1.2" y="2" width="4.8" height="4.2" fill="#e4e4e4"/><rect x="2.2" y="3" width="2.8" height="2.4" fill="none" stroke="#444" stroke-width="0.8"/></svg><div class="t" style="left:621.5px;top:297.56px;font-size:6.5px;line-height:7.5px;transform:scaleX(0.85);transform-origin:0 0;color:#e0e0e0;width:60px;"><span class="c" style="width:7.0588235294117645px">矩</span><span class="c" style="width:7.0588235294117645px">形</span> 1 <span class="c" style="width:7.0588235294117645px">拷</span><span class="c" style="width:7.0588235294117645px">贝</span> 8</div><div class="a" style="left:585px;top:329.64px;width:112px;height:1px;background:#434343;"></div><div class="a" style="left:599px;top:311.64px;width:1px;height:18px;background:#4a4a4a;"></div><svg style="left:589px;top:318.64px" width="8" height="6"><path d="M0.3 2.8Q3.7 -0.6 7.1 2.8Q3.7 6.2 0.3 2.8Z" fill="#d4d4d4"/><circle cx="3.7" cy="2.8" r="1.25" fill="#555"/><circle cx="3.7" cy="2.8" r="0.4" fill="#ddd"/></svg><div class="a" style="left:602px;top:313.64px;width:15px;height:15px;background-color:#fff;background-image:linear-gradient(45deg,#dedede 25%,transparent 25%,transparent 75%,#dedede 75%),linear-gradient(45deg,#dedede 25%,transparent 25%,transparent 75%,#dedede 75%);background-size:6px 6px;background-position:0 0,3px 3px"></div><svg style="left:602px;top:313.64px" width="15" height="15"><g transform="translate(7.5,6.5) rotate(153.3)"><rect x="-0.55" y="-4.3" width="1.1" height="4.3" fill="#1a1a1a"/></g></svg><svg style="left:610px;top:321.64px" width="7" height="7"><rect x="0" y="0" width="7" height="7" fill="#9a9a9a"/><rect x="0" y="0" width="7" height="1" fill="#555"/><rect x="1.2" y="2" width="4.8" height="4.2" fill="#e4e4e4"/><rect x="2.2" y="3" width="2.8" height="2.4" fill="none" stroke="#444" stroke-width="0.8"/></svg><div class="t" style="left:621.5px;top:316.64px;font-size:6.5px;line-height:7.5px;transform:scaleX(0.85);transform-origin:0 0;color:#e0e0e0;width:60px;"><span class="c" style="width:7.0588235294117645px">矩</span><span class="c" style="width:7.0588235294117645px">形</span> 1 <span class="c" style="width:7.0588235294117645px">拷</span><span class="c" style="width:7.0588235294117645px">贝</span> 7</div><div class="a" style="left:585px;top:348.72px;width:112px;height:1px;background:#434343;"></div><div class="a" style="left:599px;top:330.72px;width:1px;height:18px;background:#4a4a4a;"></div><svg style="left:589px;top:337.72px" width="8" height="6"><path d="M0.3 2.8Q3.7 -0.6 7.1 2.8Q3.7 6.2 0.3 2.8Z" fill="#d4d4d4"/><circle cx="3.7" cy="2.8" r="1.25" fill="#555"/><circle cx="3.7" cy="2.8" r="0.4" fill="#ddd"/></svg><div class="a" style="left:602px;top:332.72px;width:15px;height:15px;background-color:#fff;background-image:linear-gradient(45deg,#dedede 25%,transparent 25%,transparent 75%,#dedede 75%),linear-gradient(45deg,#dedede 25%,transparent 25%,transparent 75%,#dedede 75%);background-size:6px 6px;background-position:0 0,3px 3px"></div><svg style="left:602px;top:332.72px" width="15" height="15"><g transform="translate(7.5,6.5) rotate(131.4)"><rect x="-0.55" y="-4.3" width="1.1" height="4.3" fill="#1a1a1a"/></g></svg><svg style="left:610px;top:340.72px" width="7" height="7"><rect x="0" y="0" width="7" height="7" fill="#9a9a9a"/><rect x="0" y="0" width="7" height="1" fill="#555"/><rect x="1.2" y="2" width="4.8" height="4.2" fill="#e4e4e4"/><rect x="2.2" y="3" width="2.8" height="2.4" fill="none" stroke="#444" stroke-width="0.8"/></svg><div class="t" style="left:621.5px;top:335.72px;font-size:6.5px;line-height:7.5px;transform:scaleX(0.85);transform-origin:0 0;color:#e0e0e0;width:60px;"><span class="c" style="width:7.0588235294117645px">矩</span><span class="c" style="width:7.0588235294117645px">形</span> 1 <span class="c" style="width:7.0588235294117645px">拷</span><span class="c" style="width:7.0588235294117645px">贝</span> 6</div><div class="a" style="left:585px;top:367.8px;width:112px;height:1px;background:#434343;"></div><div class="a" style="left:599px;top:349.8px;width:1px;height:18px;background:#4a4a4a;"></div><svg style="left:589px;top:356.8px" width="8" height="6"><path d="M0.3 2.8Q3.7 -0.6 7.1 2.8Q3.7 6.2 0.3 2.8Z" fill="#d4d4d4"/><circle cx="3.7" cy="2.8" r="1.25" fill="#555"/><circle cx="3.7" cy="2.8" r="0.4" fill="#ddd"/></svg><div class="a" style="left:602px;top:351.8px;width:15px;height:15px;background-color:#fff;background-image:linear-gradient(45deg,#dedede 25%,transparent 25%,transparent 75%,#dedede 75%),linear-gradient(45deg,#dedede 25%,transparent 25%,transparent 75%,#dedede 75%);background-size:6px 6px;background-position:0 0,3px 3px"></div><svg style="left:602px;top:351.8px" width="15" height="15"><g transform="translate(7.5,6.5) rotate(109.5)"><rect x="-0.55" y="-4.3" width="1.1" height="4.3" fill="#1a1a1a"/></g></svg><svg style="left:610px;top:359.8px" width="7" height="7"><rect x="0" y="0" width="7" height="7" fill="#9a9a9a"/><rect x="0" y="0" width="7" height="1" fill="#555"/><rect x="1.2" y="2" width="4.8" height="4.2" fill="#e4e4e4"/><rect x="2.2" y="3" width="2.8" height="2.4" fill="none" stroke="#444" stroke-width="0.8"/></svg><div class="t" style="left:621.5px;top:354.8px;font-size:6.5px;line-height:7.5px;transform:scaleX(0.85);transform-origin:0 0;color:#e0e0e0;width:60px;"><span class="c" style="width:7.0588235294117645px">矩</span><span class="c" style="width:7.0588235294117645px">形</span> 1 <span class="c" style="width:7.0588235294117645px">拷</span><span class="c" style="width:7.0588235294117645px">贝</span> 5</div><div class="a" style="left:585px;top:386.88px;width:112px;height:1px;background:#434343;"></div><div class="a" style="left:599px;top:368.88px;width:1px;height:18px;background:#4a4a4a;"></div><svg style="left:589px;top:375.88px" width="8" height="6"><path d="M0.3 2.8Q3.7 -0.6 7.1 2.8Q3.7 6.2 0.3 2.8Z" fill="#d4d4d4"/><circle cx="3.7" cy="2.8" r="1.25" fill="#555"/><circle cx="3.7" cy="2.8" r="0.4" fill="#ddd"/></svg><div class="a" style="left:602px;top:370.88px;width:15px;height:15px;background-color:#fff;background-image:linear-gradient(45deg,#dedede 25%,transparent 25%,transparent 75%,#dedede 75%),linear-gradient(45deg,#dedede 25%,transparent 25%,transparent 75%,#dedede 75%);background-size:6px 6px;background-position:0 0,3px 3px"></div><svg style="left:602px;top:370.88px" width="15" height="15"><g transform="translate(7.5,6.5) rotate(87.6)"><rect x="-0.55" y="-4.3" width="1.1" height="4.3" fill="#1a1a1a"/></g></svg><svg style="left:610px;top:378.88px" width="7" height="7"><rect x="0" y="0" width="7" height="7" fill="#9a9a9a"/><rect x="0" y="0" width="7" height="1" fill="#555"/><rect x="1.2" y="2" width="4.8" height="4.2" fill="#e4e4e4"/><rect x="2.2" y="3" width="2.8" height="2.4" fill="none" stroke="#444" stroke-width="0.8"/></svg><div class="t" style="left:621.5px;top:373.88px;font-size:6.5px;line-height:7.5px;transform:scaleX(0.85);transform-origin:0 0;color:#e0e0e0;width:60px;"><span class="c" style="width:7.0588235294117645px">矩</span><span class="c" style="width:7.0588235294117645px">形</span> 1 <span class="c" style="width:7.0588235294117645px">拷</span><span class="c" style="width:7.0588235294117645px">贝</span> 4</div><div class="a" style="left:585px;top:405.96px;width:112px;height:1px;background:#434343;"></div><div class="a" style="left:599px;top:387.96px;width:1px;height:18px;background:#4a4a4a;"></div><svg style="left:589px;top:394.96px" width="8" height="6"><path d="M0.3 2.8Q3.7 -0.6 7.1 2.8Q3.7 6.2 0.3 2.8Z" fill="#d4d4d4"/><circle cx="3.7" cy="2.8" r="1.25" fill="#555"/><circle cx="3.7" cy="2.8" r="0.4" fill="#ddd"/></svg><div class="a" style="left:602px;top:389.96px;width:15px;height:15px;background-color:#fff;background-image:linear-gradient(45deg,#dedede 25%,transparent 25%,transparent 75%,#dedede 75%),linear-gradient(45deg,#dedede 25%,transparent 25%,transparent 75%,#dedede 75%);background-size:6px 6px;background-position:0 0,3px 3px"></div><svg style="left:602px;top:389.96px" width="15" height="15"><g transform="translate(7.5,6.5) rotate(65.7)"><rect x="-0.55" y="-4.3" width="1.1" height="4.3" fill="#1a1a1a"/></g></svg><svg style="left:610px;top:397.96px" width="7" height="7"><rect x="0" y="0" width="7" height="7" fill="#9a9a9a"/><rect x="0" y="0" width="7" height="1" fill="#555"/><rect x="1.2" y="2" width="4.8" height="4.2" fill="#e4e4e4"/><rect x="2.2" y="3" width="2.8" height="2.4" fill="none" stroke="#444" stroke-width="0.8"/></svg><div class="t" style="left:621.5px;top:392.96px;font-size:6.5px;line-height:7.5px;transform:scaleX(0.85);transform-origin:0 0;color:#e0e0e0;width:60px;"><span class="c" style="width:7.0588235294117645px">矩</span><span class="c" style="width:7.0588235294117645px">形</span> 1 <span class="c" style="width:7.0588235294117645px">拷</span><span class="c" style="width:7.0588235294117645px">贝</span> 3</div><svg style="left:603px;top:409px" width="90" height="10" fill="none" stroke="#b8b8b8" stroke-width="0.9"><path d="M1 5H9" stroke="#888" stroke-dasharray="1 1" stroke-width="2"/><text x="15" y="7.5" font-size="8" font-style="italic" fill="#b8b8b8" stroke="none" font-family="Liberation Serif">fx</text><rect x="28" y="1.5" width="8" height="6" fill="#b8b8b8"/><circle cx="32" cy="4.5" r="1.8" fill="#535353" stroke="none"/><circle cx="45" cy="4.5" r="3.2"/><path d="M45 1.3A3.2 3.2 0 0 1 45 7.7Z" fill="#b8b8b8"/><path d="M53 2H56L57 3H61V8H53Z" fill="#b8b8b8"/><rect x="68" y="2" width="5.5" height="5.5"/><path d="M72 1V4M70.5 2.5H73.5" /><path d="M79 2.5H86M80 3V8.5H85V3M81.5 1.5H83.5" /></svg><svg style="left:0;top:0" width="705" height="421" viewBox="0 0 705 421"><defs><clipPath id="imc"><rect x="443.5" y="392" width="86.5" height="23" rx="6"/></clipPath><linearGradient id="img" x1="0" x2="1" y1="0" y2="0"><stop offset="0" stop-color="#121827"/><stop offset="0.38" stop-color="#121827"/><stop offset="0.5" stop-color="#0d1f1a"/><stop offset="1" stop-color="#173a22"/></linearGradient></defs><rect x="443.5" y="392" width="86.5" height="23" rx="6" fill="url(#img)" stroke="#2a3244" stroke-width="0.6"/><g clip-path="url(#imc)"><ellipse cx="489" cy="396" rx="7" ry="3" fill="#1d3b27"/><ellipse cx="496" cy="401" rx="5" ry="3" fill="#10261b"/><ellipse cx="517" cy="397" rx="10" ry="4.5" transform="rotate(10 517 397)" fill="#3e7e34"/><ellipse cx="524" cy="395" rx="6" ry="3.5" transform="rotate(-25 524 395)" fill="#9ccf84"/><ellipse cx="512" cy="395" rx="5" ry="2.5" transform="rotate(25 512 395)" fill="#6aa855"/><ellipse cx="521" cy="405" rx="4" ry="6" transform="rotate(20 521 405)" fill="#2f6a28"/><ellipse cx="505" cy="409" rx="8" ry="3.2" transform="rotate(-20 505 409)" fill="#88c46c"/><ellipse cx="499" cy="411" rx="5" ry="2" transform="rotate(30 499 411)" fill="#a8da8c"/><ellipse cx="512" cy="411" rx="5" ry="2.5" transform="rotate(-50 512 411)" fill="#5c9c48"/><ellipse cx="508" cy="414" rx="6" ry="2" fill="#3e7a34"/><circle cx="514" cy="404" r="2.2" fill="#eef4ea"/><circle cx="520" cy="412.5" r="2.2" fill="#e6eee0"/><ellipse cx="528.5" cy="406" rx="2" ry="4" fill="#f2f6ee"/><circle cx="505" cy="410" r="1.6" fill="#d8eac8"/><circle cx="482" cy="393.5" r="1.4" fill="#c8dcc0"/></g></svg><div class="t" style="left:452.5px;top:397.5px;font-size:8px;line-height:9px;transform:scaleX(0.85);transform-origin:0 0;color:#c8ccd6;width:9px;"><span class="c" style="width:7.0588235294117645px">中</span></div><svg style="left:464px;top:398px" width="8" height="8"><circle cx="2" cy="2" r="1" fill="none" stroke="#c8ccd6" stroke-width="0.6"/><path d="M5.5 4.5Q6 6 5 7" stroke="#c8ccd6" stroke-width="0.9" fill="none"/></svg><svg style="left:477.5px;top:399.5px" width="8" height="8"><path d="M0.5 1.8L2.6 0.3H5.4L7.5 1.8L6.6 3.4H5.9V7.4H2.1V3.4H1.4Z" fill="#eef0f2"/></svg>
</body></html>
